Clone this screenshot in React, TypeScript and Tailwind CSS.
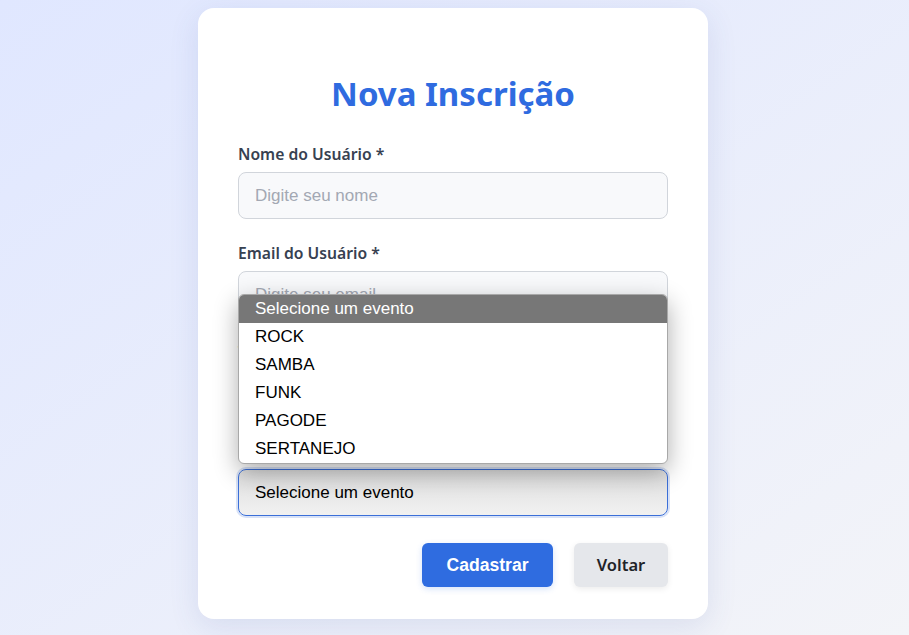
import { useState } from "react";

const EVENTOS = ["ROCK", "SAMBA", "FUNK", "PAGODE", "SERTANEJO"];

const labelClass =
  "block h-5 mb-2 text-[15.7px] leading-5 font-semibold text-[#374151] font-['Noto_Sans',sans-serif]";
const inputClass =
  "w-full h-[47px] px-4 rounded-lg border border-[#d1d5db] bg-[#f8f9fb] text-[17px] text-black placeholder:text-[#a3a8b3] font-['Liberation_Sans',Arial,sans-serif] outline-none";

export default function App() {
  const [nome, setNome] = useState("");
  const [email, setEmail] = useState("");
  const [telefone, setTelefone] = useState("");

  return (
    <div className="min-h-screen w-full bg-gradient-to-br from-[#e0e7ff] to-[#f3f4f8] pt-2 pr-[3px]">
      <div className="mx-auto w-[510px] rounded-2xl bg-white px-10 pt-[66px] pb-8 shadow-[0_8px_30px_rgba(60,80,160,0.12)]">
        {/* Title */}
        <h1 className="text-center text-[33px] leading-10 font-bold text-[#2f6be0] font-['Noto_Sans',sans-serif]">
          Nova Inscrição
        </h1>

        <form className="mt-[30px]" onSubmit={(e) => e.preventDefault()}>
          <div>
            <label className={labelClass}>Nome do Usuário *</label>
            <input
              className={inputClass}
              placeholder="Digite seu nome"
              value={nome}
              onChange={(e) => setNome(e.target.value)}
            />
          </div>

          <div className="mt-6">
            <label className={labelClass}>Email do Usuário *</label>
            <input
              className={inputClass}
              placeholder="Digite seu email"
              value={email}
              onChange={(e) => setEmail(e.target.value)}
            />
          </div>

          <div className="mt-6">
            <label className={labelClass}>Telefone do Usuário *</label>
            <input
              className={inputClass}
              placeholder="Digite seu telefone"
              value={telefone}
              onChange={(e) => setTelefone(e.target.value)}
            />
          </div>

          {/* Event select, with its list open */}
          <div className="mt-6">
            <label className={labelClass}>Evento *</label>
            <div className="relative">
              <div className="flex h-[47px] w-full items-center rounded-lg border border-[#3b6fd8] bg-gradient-to-b from-[#dedede] to-[#f1f1f1] px-4 text-[17px] text-black font-['Liberation_Sans',Arial,sans-serif] shadow-[0_0_0_2px_rgba(59,111,216,0.2)]">
                Selecione um evento
              </div>

              <ul className="absolute left-0 right-0 bottom-full mb-[5px] z-10 overflow-hidden rounded-md border border-[#a8a8a8] bg-white text-[17px] leading-7 text-black font-['Liberation_Sans',Arial,sans-serif] shadow-[0_8px_24px_rgba(0,0,0,0.32)]">
                <li className="h-7 bg-[#777777] px-4 text-white">Selecione um evento</li>
                {EVENTOS.map((ev) => (
                  <li key={ev} className="h-7 px-4">
                    {ev}
                  </li>
                ))}
              </ul>
            </div>
          </div>

          {/* Actions */}
          <div className="mt-[27px] flex justify-end gap-[21px]">
            <button
              type="submit"
              className="h-11 w-[131px] rounded-md bg-[#2f6ce0] text-[17.6px] font-bold text-white font-['Liberation_Sans',Arial,sans-serif] shadow-[0_2px_6px_rgba(47,108,224,0.2)]"
            >
              Cadastrar
            </button>
            <button
              type="button"
              className="h-11 w-[94px] rounded-md bg-[#e5e7eb] text-[16.5px] font-semibold text-[#1f2328] font-['Noto_Sans',sans-serif] shadow-[0_2px_6px_rgba(0,0,0,0.08)]"
            >
              Voltar
            </button>
          </div>
        </form>
      </div>
    </div>
  );
}
